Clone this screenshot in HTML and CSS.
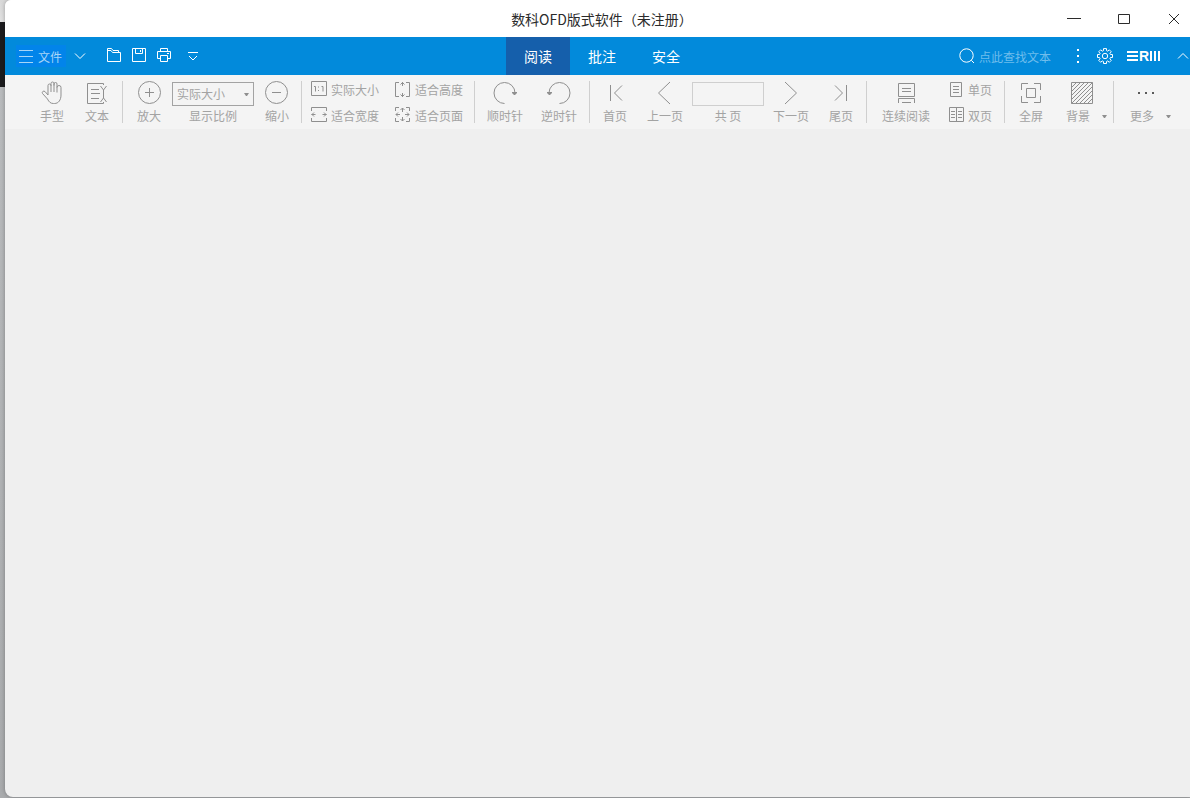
FILE: index.html
```html
<!doctype html>
<html lang="zh-CN">
  <head>
    <meta charset="UTF-8" />
    <meta name="viewport" content="width=device-width, initial-scale=1.0" />
    <title>数科OFD版式软件</title>
    <link rel="stylesheet" href="styles.css">
  </head>
  <body>
    <div class="window">
      <header class="titlebar">
        <h1 class="title">数科OFD版式软件（未注册）</h1>
        <div class="window-controls">
          <button aria-label="最小化"><svg width="16" height="16"><path d="M1 7.5h14"/></svg></button>
          <button aria-label="最大化"><svg width="16" height="16"><path d="M2.500 3.500h11v9h-11z"/></svg></button>
          <button aria-label="关闭"><svg width="16" height="16"><path d="M3 3l10 10M13 3L3 13"/></svg></button>
        </div>
      </header>

      <nav class="ribbon">
        <div class="ribbon-left">
          <button class="file-btn">
            <svg width="14" height="14"><path d="M0 1.500h14M0 7.500h14M0 13.500h14"/></svg>
            <span>文件</span>
          </button>
          <button class="file-arrow" aria-label="文件菜单"><svg width="12" height="16"><path d="M1 5.500l5 5 5-5"/></svg></button>
          <div class="quick">
            <button aria-label="打开"><svg width="16" height="16"><path d="M1.500 14.500v-13h4l1.500 2h5.500v2M1.500 14.500h13v-9h-8l-1.500-2h-3.500"/></svg></button>
            <button aria-label="保存"><svg width="16" height="16"><path d="M1.500 1.500h13v13h-13zM4.500 1.500v5h7v-5M9.500 3v2"/></svg></button>
            <button aria-label="打印"><svg width="16" height="16"><path d="M4.500 4.500v-3h7v3M4.500 11.500h-3v-7h13v7h-3M4.500 8.500h7v6h-7zM11 6.500h2"/></svg></button>
          </div>
          <button class="quick-more" aria-label="自定义"><svg width="12" height="16"><path d="M1 4.500h10M2 8l4 4 4-4"/></svg></button>
        </div>

        <div class="tabs">
          <button class="tab active">阅读</button>
          <button class="tab">批注</button>
          <button class="tab">安全</button>
        </div>

        <div class="ribbon-right">
          <label class="search">
            <svg width="16" height="16"><circle cx="7.500" cy="7.500" r="6.700"/><path d="M12.300 12.300l2.700 2.700"/></svg>
            <input type="text" placeholder="点此查找文本" aria-label="查找文本">
          </label>
          <button class="dots" aria-label="查找选项"><svg width="4" height="16"><path class="solid" d="M1 1h2v2h-2zM1 7h2v2h-2zM1 13h2v2h-2z"/></svg></button>
          <button class="settings" aria-label="设置">
            <svg width="16" height="16"><path d="M6.500.6h3v2l1.300.6 1.500-1.400 2 2-1.400 1.500.6 1.200h2v3h-2l-.6 1.300 1.400 1.500-2 2-1.500-1.400-1.300.6v2h-3v-2l-1.300-.6-1.500 1.400-2-2 1.400-1.500-.6-1.300h-2v-3h2l.6-1.200-1.400-1.500 2-2 1.500 1.400 1.300-.6z"/><circle cx="8" cy="8" r="2.700"/></svg>
          </button>
          <div class="brand">
            <svg width="11" height="10"><path class="solid" d="M0 0h11v2H0zM0 4h11v2H0zM0 8h11v2H0z"/></svg>
            <span>R</span>
            <svg width="11" height="10"><path class="solid" d="M0 0h2v10H0zM4 0h2v10H4zM8 0h2v10H8z"/></svg>
          </div>
          <button class="collapse" aria-label="收起功能区"><svg width="12" height="16"><path d="M1 10.500l5-5 5 5"/></svg></button>
        </div>
      </nav>

      <div class="toolbar">
        <div class="group group-select">
          <button class="tool">
            <svg width="24" height="24"><path d="M8 14V4.500a1.500 1.500 0 0 1 3 0V11M11 5V2.500a1.500 1.500 0 0 1 3 0V11M14 4.500V3a1.500 1.500 0 0 1 3 0v8.500M17 6.500a1.500 1.500 0 0 1 4 0V14c0 5-2.500 8.500-6.500 8.500h-1c-3 0-4.500-1.500-6-4.500l-5-5.500c-1-1.500 1-3.200 2.500-2L8 14"/></svg>
            <span>手型</span>
          </button>
          <button class="tool">
            <svg width="24" height="24"><path d="M18.500 4V2.500h-16v20h16V21M15.500 5l3 4 3-4M18.500 9v8M15.500 21l3-4 3 4M6 8.500h8M6 12.500h9M6 17.500h8"/></svg>
            <span>文本</span>
          </button>
        </div>

        <div class="group group-zoom">
          <button class="tool">
            <svg width="24" height="24"><circle cx="12.500" cy="11.500" r="11"/><path d="M8 11.500h9M12.500 7v9"/></svg>
            <span>放大</span>
          </button>
          <div class="field">
            <div class="zoom-box">
              <select id="zoom"><option>实际大小</option><option>适合宽度</option><option>适合高度</option></select>
              <svg class="caret" width="5" height="3"><path d="M0 0h5L3 3H2z"/></svg>
            </div>
            <label for="zoom">显示比例</label>
          </div>
          <button class="tool">
            <svg width="24" height="24"><circle cx="11.500" cy="11.500" r="11"/><path d="M7 11.500h9"/></svg>
            <span>缩小</span>
          </button>
        </div>

        <div class="group group-fit">
          <button class="mini">
            <svg width="16" height="16"><path d="M.5.5h15v14H.5zM3 5.500h1.500v5M10.500 5.500H12v5M7.500 5.500v1M7.500 9v1"/></svg>
            <span>实际大小</span>
          </button>
          <button class="mini">
            <svg width="16" height="16"><path d="M4 1.500H.5v14H4M11 1.500h3.500v14H11M7.500 1v4M7.500 12v4M5.500 3.500l2-2 2 2M5.500 13.500l2 2 2-2"/></svg>
            <span>适合高度</span>
          </button>
          <button class="mini">
            <svg width="16" height="16"><path d="M.5 4V.5h15V4M.5 11v3.500h15V11M.5 7.500h4M11.500 7.500h4M3 5.500l-2 2 2 2M13 5.500l2 2-2 2"/></svg>
            <span>适合宽度</span>
          </button>
          <button class="mini">
            <svg width="16" height="16"><path d="M.5 4V.5H4M11 .5h3.500V4M.5 11v3.500H4M14.500 11v3.500H11M7.500 1v4M7.500 10v4M1 7.500h4M10 7.500h4M5.500 3l2-2 2 2M5.500 12l2 2 2-2M3 5.500l-2 2 2 2M12 5.500l2 2-2 2"/></svg>
            <span>适合页面</span>
          </button>
        </div>

        <div class="group group-rotate">
          <button class="tool">
            <svg width="24" height="24"><path d="M11.500 22.500A10.500 10.500 0 1 1 22 12"/><path class="solid" d="M19 11h5v1l-2 2h-1l-2-2z"/></svg>
            <span>顺时针</span>
          </button>
          <button class="tool">
            <svg width="24" height="24"><path d="M12.500 22.500A10.500 10.500 0 1 0 2 12"/><path class="solid" d="M0 11h5v1l-2 2H2l-2-2z"/></svg>
            <span>逆时针</span>
          </button>
        </div>

        <div class="group group-pages">
          <button class="tool">
            <svg width="24" height="24"><path d="M7.500 4v16M19 4.500L11.500 12l7.500 7.500"/></svg>
            <span>首页</span>
          </button>
          <button class="tool">
            <svg width="24" height="24"><path d="M17 1L5.500 12 17 23"/></svg>
            <span>上一页</span>
          </button>
          <div class="field page-field">
            <input type="text" id="page">
            <label for="page">共 页</label>
          </div>
          <button class="tool">
            <svg width="24" height="24"><path d="M6 1l11.500 11L6 23"/></svg>
            <span>下一页</span>
          </button>
          <button class="tool">
            <svg width="24" height="24"><path d="M17.500 4v16M6 4.500l7.500 7.500L6 19.500"/></svg>
            <span>尾页</span>
          </button>
        </div>

        <div class="group group-layout">
          <button class="tool">
            <svg width="24" height="24"><path d="M4.500 2.500h16v13h-16zM8 7.500h9M8 10.500h9M4.500 22v-4.500h16V22M8 21.500h9"/></svg>
            <span>连续阅读</span>
          </button>
          <div class="stack">
            <button class="mini">
              <svg width="16" height="16"><path d="M2.500 1.500h11v14h-11zM5 5.500h6M5 8.500h6M5 11.500h6"/></svg>
              <span>单页</span>
            </button>
            <button class="mini">
              <svg width="16" height="16"><path d="M1.500.5h14v14h-14zM8.500.5v14M3 4.500h4M3 7.500h4M3 10.500h4M10 4.500h4M10 7.500h4M10 10.500h4"/></svg>
              <span>双页</span>
            </button>
          </div>
        </div>

        <div class="group group-view">
          <button class="tool">
            <svg width="24" height="24"><path d="M2.500 9V2.500H9M15 2.500h6.500V9M21.500 15v6.500H15M9 21.500H2.500V15M7.500 7.500h9v9h-9z"/></svg>
            <span>全屏</span>
          </button>
          <button class="tool drop">
            <svg width="24" height="24"><path d="M1.500 1.500h21v21h-21zM1.500 6.500l5-5M1.500 10.500l9-9M1.500 14.500l13-13M1.500 18.500l17-17M1.500 22.500l21-21M5.500 22.500l17-17M9.500 22.500l13-13M13.500 22.500l9-9M17.500 22.500l5-5"/></svg>
            <span>背景 <svg class="caret" width="5" height="3"><path d="M0 0h5L3 3H2z"/></svg></span>
          </button>
        </div>

        <div class="group group-more">
          <button class="tool drop">
            <svg width="24" height="24"><path class="dark" d="M4 11h2v2H4zM11 11h2v2h-2zM18 11h2v2h-2z"/></svg>
            <span>更多 <svg class="caret" width="5" height="3"><path d="M0 0h5L3 3H2z"/></svg></span>
          </button>
        </div>
      </div>

      <main class="workspace"></main>
    </div>
  </body>
</html>
```
FILE: styles.css
```css
* {
  box-sizing: border-box;
}

body {
  margin: 0;
  font-family: "Noto Sans CJK SC", "Noto Sans", sans-serif;
  font-size: 12px;
  background: linear-gradient(#d8d8d8 0, #e2e2e2 22px, #1c1c1e 22px, #1c1c1e 87px, #b9bbbd 87px, #a9abad 100%);
}

button,
input,
select {
  margin: 0;
  padding: 0;
  border: none;
  background: none;
  color: inherit;
  font: inherit;
}

svg {
  display: block;
  flex: none;
  fill: none;
  stroke: currentColor;
}

.solid {
  fill: currentColor;
  stroke: none;
}

.window {
  display: flex;
  flex-direction: column;
  height: calc(100vh - 1px);
  margin: 0 0 1px 5px;
  overflow: hidden;
  border-radius: 6px 0 0 8px;
  background: #efefef;
  box-shadow: 0 0 4px rgba(0, 0, 0, 0.3);
}

/* Title bar */
.titlebar,
.ribbon {
  display: grid;
  grid-template-columns: 1fr auto 1fr;
  align-items: center;
  flex: none;
  padding-left: 9px;
}

.titlebar {
  height: 37px;
  background: #fff;
  color: #2b2b2b;
}

.title {
  grid-column: 2;
  margin: 0;
  font-size: 14px;
  font-weight: 400;
  line-height: 20px;
}

.window-controls {
  display: flex;
  justify-content: flex-end;
  gap: 18px;
}

.window-controls button {
  display: flex;
  align-items: center;
  justify-content: center;
  width: 32px;
  height: 32px;
}

/* Blue bar */
.ribbon {
  height: 38px;
  background: #028adb;
  color: #fff;
}

.ribbon-left,
.ribbon-right,
.quick {
  display: flex;
  align-items: center;
}

.file-btn {
  display: flex;
  align-items: center;
  gap: 5px;
  height: 22px;
  margin-left: 2px;
  padding: 0 4px 0 3px;
  background: #0284ea;
  color: #a9d5f7;
}

.file-arrow {
  margin-left: 8px;
}

.quick {
  gap: 9px;
  margin-left: 20px;
  padding-bottom: 2px;
}

.quick-more {
  margin-left: 15px;
}

.tabs {
  display: flex;
  height: 38px;
}

.tab {
  width: 64px;
  font-size: 14px;
}

.tab.active {
  background: #155fab;
}

.ribbon-right {
  justify-content: flex-end;
  padding-right: 1px;
}

.search {
  display: flex;
  align-items: center;
  gap: 4px;
}

.search input {
  width: 92px;
  outline: none;
}

.search input::placeholder {
  color: #6fbdec;
  opacity: 1;
}

.dots {
  margin-left: 5px;
}

.settings {
  margin-left: 17px;
}

.brand {
  display: flex;
  align-items: center;
  gap: 1px;
  margin: 0 16px 0 14px;
  font-family: "Liberation Sans", Arial, sans-serif;
  font-size: 14px;
  font-weight: 700;
  line-height: 16px;
}

/* Toolbar */
.toolbar {
  display: flex;
  flex: none;
  height: 54px;
  background: #f4f4f4;
  color: #a3a3a3;
  white-space: nowrap;
}

.toolbar svg {
  color: #8f8f8f;
}

.group {
  position: relative;
  display: flex;
  flex: none;
  padding-right: 1px;
}

.group::after {
  content: "";
  position: absolute;
  top: 6px;
  right: 0;
  width: 1px;
  height: 42px;
  background: #cfcfcf;
}

.group-more::after {
  display: none;
}

.tool,
.field {
  display: flex;
  flex-direction: column;
  align-items: center;
  padding-top: 6px;
  line-height: 18px;
}

.tool {
  gap: 2px;
  width: 44px;
}

.field {
  gap: 1px;
  padding-top: 7px;
}

.group-select {
  gap: 1px;
  padding: 0 4px 0 25px;
}

.group-zoom {
  gap: 1px;
  padding: 0 3px 0 4px;
}

.zoom-box {
  position: relative;
}

.zoom-box select {
  display: block;
  appearance: none;
  width: 82px;
  height: 24px;
  padding: 0 16px 0 4px;
  border: 1px solid #a3a3a3;
  border-radius: 0;
}

.caret {
  fill: currentColor;
  stroke: none;
}

.zoom-box .caret {
  position: absolute;
  top: 11px;
  right: 5px;
  pointer-events: none;
}

.group-fit {
  display: grid;
  grid-template-columns: 84px 84px;
  grid-template-rows: 26px 26px;
  padding: 1px 1px 0 9px;
  width: 173px;
}

.mini {
  display: flex;
  align-items: center;
  gap: 4px;
  height: 26px;
}

.group-rotate {
  padding: 0 4px 0 3px;
}

.group-rotate .tool {
  width: 54px;
}

.group-pages .tool {
  width: 50px;
}

.page-field {
  width: 76px;
}

.page-field input {
  width: 72px;
  height: 24px;
  border: 1px solid #cfcfcf;
  text-align: center;
}

.group-layout {
  padding-right: 13px;
}

.group-layout .tool {
  width: 78px;
}

.stack {
  padding: 1px 0 0 3px;
}

.group-view .tool {
  width: 52px;
}

.group-view .tool.drop {
  width: 56px;
  padding-left: 9px;
}

.tool.drop {
  align-items: flex-start;
}

.tool.drop > svg {
  margin-left: 4px;
}

.tool.drop span {
  display: flex;
  align-items: center;
  gap: 12px;
}

.group-more .tool.drop {
  width: 64px;
  padding-left: 16px;
}

.dark {
  fill: #5a5a5a;
  stroke: none;
}

.workspace {
  flex: 1;
}
```
